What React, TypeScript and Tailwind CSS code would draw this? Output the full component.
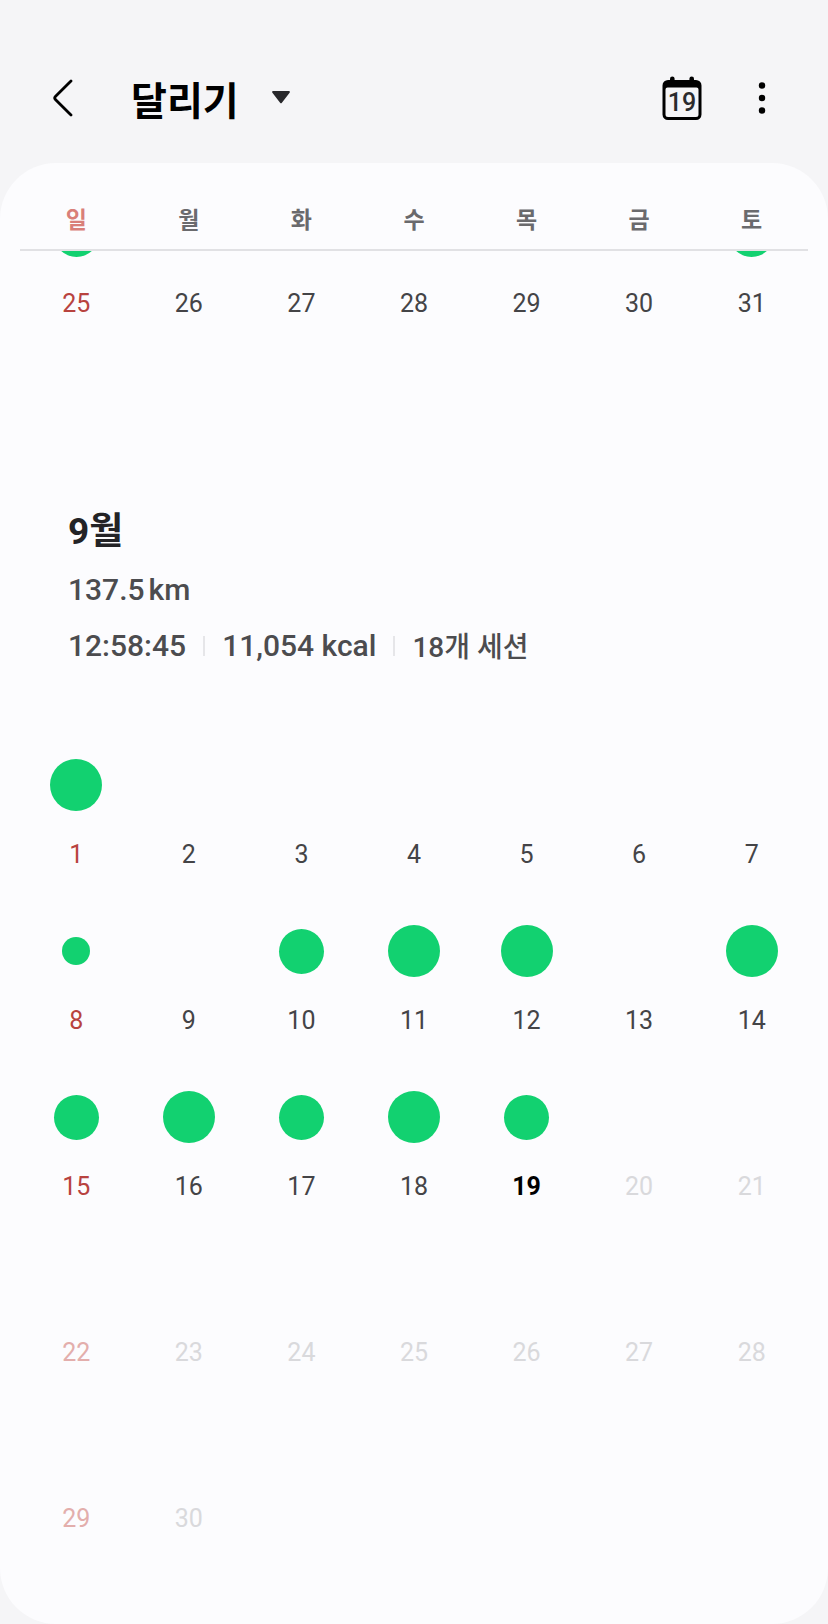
import React, { useState } from 'react';
import clsx from 'clsx';

type Size = 'sm' | 'md' | 'lg';

interface Day {
  date: number;
  run?: Size;
}

const WEEKDAYS = ['일', '월', '화', '수', '목', '금', '토'];
const TODAY = 19;

const DOT: Record<Size, string> = {
  sm: 'size-7',
  md: 'size-[45px]',
  lg: 'size-[52px]',
};

const AUGUST: Day[][] = [
  [{ date: 25, run: 'md' }, { date: 26 }, { date: 27 }, { date: 28 }, { date: 29 }, { date: 30 }, { date: 31, run: 'md' }],
];

const RUNS: Record<number, Size> = {
  1: 'lg',
  8: 'sm',
  10: 'md',
  11: 'lg',
  12: 'lg',
  14: 'lg',
  15: 'md',
  16: 'lg',
  17: 'md',
  18: 'lg',
  19: 'md',
};

const SEPTEMBER: Day[][] = [0, 1, 2, 3, 4].map((week) =>
  [1, 2, 3, 4, 5, 6, 7]
    .map((d) => week * 7 + d)
    .filter((date) => date <= 30)
    .map((date) => ({ date, run: RUNS[date] }))
);

const dateColor = (sunday: boolean, future: boolean, selected: boolean) => {
  if (future) return sunday ? 'text-[#e3aeac]' : 'text-[#d9d9dc]';
  if (selected) return 'font-bold text-black';
  return sunday ? 'text-[#b8433f]' : 'text-[#444447]';
};

const CalendarIcon: React.FC = () => (
  <svg width="40" height="44" viewBox="0 0 40 44" aria-hidden="true">
    <rect x="8" y="0.5" width="4.6" height="9" rx="2.3" />
    <rect x="27.4" y="0.5" width="4.6" height="9" rx="2.3" />
    <path
      fillRule="evenodd"
      d="M6 4H34a5.5 5.5 0 0 1 5.5 5.5V38.5a5.5 5.5 0 0 1-5.5 5.5H6A5.5 5.5 0 0 1 .5 38.5V9.5A5.5 5.5 0 0 1 6 4ZM5.500 11.500a2 2 0 0 0-2 2V38.500A2.500 2.500 0 0 0 6 41H34a2.500 2.500 0 0 0 2.500-2.500V13.500a2 2 0 0 0-2-2Z"
    />
    <text x="20" y="35" textAnchor="middle" className="fill-[#2b2b2d] text-[25px] font-medium">
      {TODAY}
    </text>
  </svg>
);

interface WeeksProps {
  label: string;
  weeks: Day[][];
  today?: number;
}

const Weeks: React.FC<WeeksProps> = ({ label, weeks, today }) => {
  const [selected, setSelected] = useState(today);

  return (
    <table aria-label={label} className="w-full table-fixed border-collapse">
      <tbody>
        {weeks.map((week) => (
          <tr key={week[0].date}>
            {WEEKDAYS.map((name, i) => {
              const day = week[i];
              if (!day) return <td key={name}></td>;
              const future = today !== undefined && day.date > today;
              return (
                <td key={name} className="p-0 align-top">
                  <button
                    disabled={future}
                    onClick={() => setSelected(day.date)}
                    className="flex w-full flex-col items-center gap-7 pb-[54px]"
                  >
                    <span className="flex h-[52px] items-center justify-center">
                      {day.run && <span className={clsx('rounded-full bg-[#12d170]', DOT[day.run])}></span>}
                    </span>
                    <span className={clsx('text-[25px] leading-8', dateColor(i === 0, future, day.date === selected))}>
                      {day.date}
                    </span>
                  </button>
                </td>
              );
            })}
          </tr>
        ))}
      </tbody>
    </table>
  );
};

export default function App() {
  return (
    <div className="flex min-h-screen flex-col bg-[#f5f5f7] font-[Roboto,'Noto_Sans_CJK_KR',sans-serif]">
      <header className="flex items-center justify-between pt-[66px] pr-[46px] pb-[33px] pl-[43px]">
        <div className="flex items-center">
          <button aria-label="뒤로" className="flex h-16 w-10 items-center justify-center">
            <svg width="20" height="38" viewBox="0 0 20 38" fill="none" stroke="#000" strokeWidth="2.8" strokeLinecap="round" strokeLinejoin="round" aria-hidden="true">
              <path d="M18 2 2.4 17.6a2 2 0 0 0 0 2.8L18 36" />
            </svg>
          </button>
          <button className="ml-12 flex h-16 items-center gap-8">
            <h1 className="pt-2 text-[39px] leading-none font-bold text-black">달리기</h1>
            <svg width="20" height="14" viewBox="0 0 20 14" fill="#28282b" aria-hidden="true">
              <path d="M2.2 0H17.8a1 1 0 0 1 .8 1.7L10.9 11.7a1.2 1.2 0 0 1-1.8 0L1.4 1.7A1 1 0 0 1 2.2 0Z" />
            </svg>
          </button>
        </div>
        <div className="flex items-center gap-10">
          <button aria-label="오늘">
            <CalendarIcon />
          </button>
          <button aria-label="더보기" className="flex h-16 w-10 items-center justify-center">
            <svg width="8" height="34" viewBox="0 0 8 34" aria-hidden="true">
              <circle cx="4" cy="4.5" r="3.2" />
              <circle cx="4" cy="17" r="3.2" />
              <circle cx="4" cy="29.5" r="3.2" />
            </svg>
          </button>
        </div>
      </header>

      <main className="flex-1 rounded-[56px] bg-[#fcfcfe] px-5 pb-8">
        <div className="grid grid-cols-7 border-b-2 border-[#e1e1e4] pt-[42px] pb-3">
          {WEEKDAYS.map((name, i) => (
            <span
              key={name}
              className={clsx('text-center text-[23px] leading-8 font-bold', i === 0 ? 'text-[#d97f79]' : 'text-[#6a6a6d]')}
            >
              {name}
            </span>
          ))}
        </div>

        {/* 8월 마지막 주는 요일 줄 아래로 스크롤된 상태 */}
        <div className="overflow-hidden">
          <div className="-mt-[43px]">
            <Weeks label="8월" weeks={AUGUST} />
          </div>

          <section className="mt-[132px] mb-[91px] px-12 text-[30px] font-medium text-[#4c4c4f]">
            <h2 className="text-[37px] leading-[52px] font-bold text-[#232326]">9월</h2>
            <p className="mt-3 leading-10">
              137.5<span className="ml-1">km</span>
            </p>
            <div className="mt-[14px] flex items-center gap-[17px] leading-10">
              <span>12:58:45</span>
              <span className="h-5 w-[2px] bg-[#e6e6e9]"></span>
              <span>11,054 kcal</span>
              <span className="h-5 w-[2px] bg-[#e6e6e9]"></span>
              <span className="pt-1 text-[28px]">18개 세션</span>
            </div>
          </section>

          <Weeks label="9월" weeks={SEPTEMBER} today={TODAY} />
        </div>
      </main>
    </div>
  );
}
